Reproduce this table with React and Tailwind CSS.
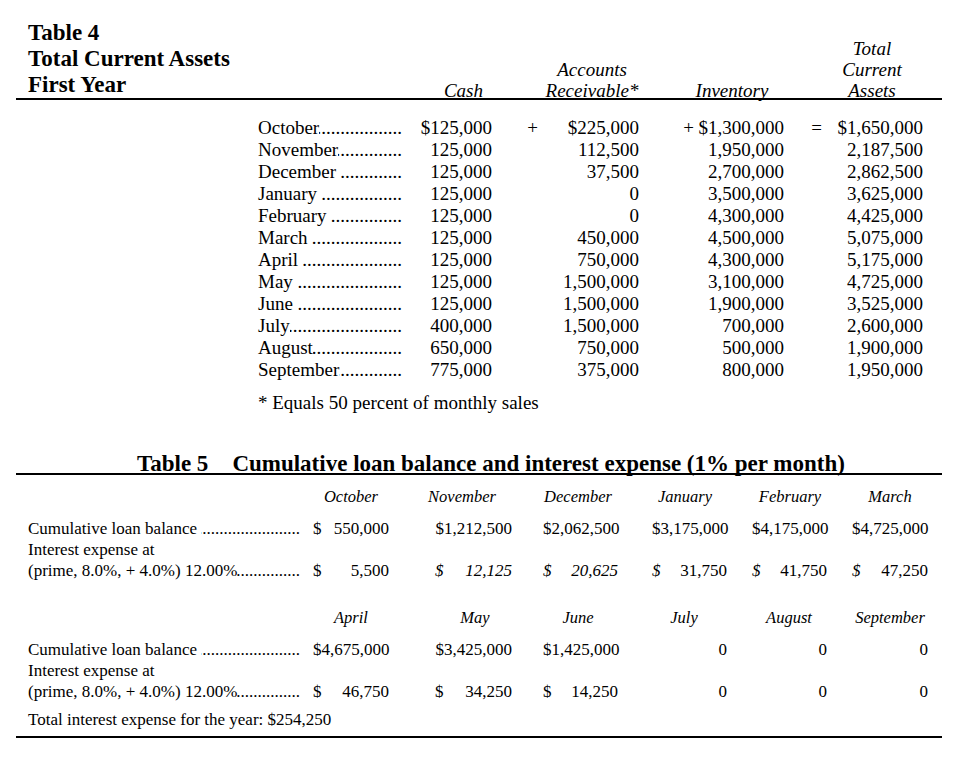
const DOTS = ".".repeat(90);

// label followed by a dot leader that always ends at the right edge of its cell
function Leader({ label, className = "" }) {
  return (
    <div className={`flex min-w-0 whitespace-nowrap ${className}`}>
      <span className="shrink-0">{label}</span>
      <span className="flex min-w-0 flex-1 justify-end overflow-hidden">
        <span className="shrink-0">{DOTS}</span>
      </span>
    </div>
  );
}

const assets = [
  ["October", "$125,000", "+", "$225,000", "+", "$1,300,000", "=", "$1,650,000"],
  ["November", "125,000", "", "112,500", "", "1,950,000", "", "2,187,500"],
  ["December\u00a0", "125,000", "", "37,500", "", "2,700,000", "", "2,862,500"],
  ["January\u00a0", "125,000", "", "0", "", "3,500,000", "", "3,625,000"],
  ["February\u00a0", "125,000", "", "0", "", "4,300,000", "", "4,425,000"],
  ["March\u00a0", "125,000", "", "450,000", "", "4,500,000", "", "5,075,000"],
  ["April\u00a0", "125,000", "", "750,000", "", "4,300,000", "", "5,175,000"],
  ["May\u00a0", "125,000", "", "1,500,000", "", "3,100,000", "", "4,725,000"],
  ["June\u00a0", "125,000", "", "1,500,000", "", "1,900,000", "", "3,525,000"],
  ["July", "400,000", "", "1,500,000", "", "700,000", "", "2,600,000"],
  ["August", "650,000", "", "750,000", "", "500,000", "", "1,900,000"],
  ["September", "775,000", "", "375,000", "", "800,000", "", "1,950,000"],
];

const t4cols = "grid grid-cols-[152px_82px_60px_87px_58px_87px_50px_89px]";

function Table4() {
  return (
    <section className="ml-[16px] w-[926px]">
      <div className="flex items-end border-b-2 border-black">
        <div className="w-[242px] shrink-0 pl-[12px] text-[23px] font-bold leading-[26px] whitespace-nowrap">
          <div>Table 4</div>
          <div>Total Current Assets</div>
          <div>First Year</div>
        </div>
        <div className={`${t4cols} -mb-[3px] items-end text-[19px] italic leading-[21px] whitespace-nowrap`}>
          <div className="col-start-2 pr-[9px] text-right">Cash</div>
          <div className="col-span-2 col-start-3 pl-[53px] text-center">
            <div>Accounts</div>
            <div>Receivable*</div>
          </div>
          <div className="col-span-2 col-start-5 pl-[41px] text-center">Inventory</div>
          <div className="col-span-2 col-start-7 pl-[37px] text-center">
            <div>Total</div>
            <div>Current</div>
            <div>Assets</div>
          </div>
        </div>
      </div>

      <div className={`${t4cols} mt-[17px] ml-[242px] text-[19px] leading-[22px] whitespace-nowrap`}>
        {assets.map(([m, cash, op1, ar, op2, inv, op3, total]) => (
          <div key={m} className="contents">
            <Leader label={m} className="pr-[8px]" />
            <div className="text-right">{cash}</div>
            <div className="pr-[14px] text-right">{op1}</div>
            <div className="text-right">{ar}</div>
            <div className="pr-[3px] text-right">{op2}</div>
            <div className="text-right">{inv}</div>
            <div className="pr-[12px] text-right">{op3}</div>
            <div className="text-right">{total}</div>
          </div>
        ))}
      </div>

      <p className="mt-[11px] ml-[242px] text-[19px] leading-[22px]">* Equals 50 percent of monthly sales</p>
    </section>
  );
}

const t5cols = "grid grid-cols-[285px_76px_123px_106px_109px_100px_101px]";
const valPads = ["pl-0", "pl-[46px]", "pl-[31px]", "pl-[34px]", "pl-[25px]", "pl-[25px]"];

const blocks = [
  {
    heads: [
      ["October", "pl-0"],
      ["November", "pl-[23px]"],
      ["December", "pl-[26px]"],
      ["January", "pl-[25px]"],
      ["February", "pl-[26px]"],
      ["March", "pl-[25px]"],
    ],
    balance: [
      { d: "$", n: "550,000" },
      "$1,212,500",
      "$2,062,500",
      "$3,175,000",
      "$4,175,000",
      "$4,725,000",
    ],
    interest: [
      { d: "$", n: "5,500" },
      { d: "$", n: "12,125", di: true, ni: true },
      { d: "$", n: "20,625", di: true, ni: true },
      { d: "$", n: "31,750", di: true },
      { d: "$", n: "41,750", di: true },
      { d: "$", n: "47,250", di: true },
    ],
  },
  {
    heads: [
      ["April", "pl-0"],
      ["May", "pl-[49px]"],
      ["June", "pl-[26px]"],
      ["July", "pl-[23px]"],
      ["August", "pl-[24px]"],
      ["September", "pl-[25px]"],
    ],
    balance: ["$4,675,000", "$3,425,000", "$1,425,000", "0", "0", "0"],
    interest: [
      { d: "$", n: "46,750" },
      { d: "$", n: "34,250" },
      { d: "$", n: "14,250" },
      "0",
      "0",
      "0",
    ],
  },
];

function Value({ v, pad }) {
  if (typeof v === "string") return <div className={`${pad} text-right`}>{v}</div>;
  return (
    <div className={pad}>
      <div className="flex justify-between">
        <span className={v.di ? "italic" : ""}>{v.d}</span>
        <span className={v.ni ? "italic" : ""}>{v.n}</span>
      </div>
    </div>
  );
}

function LoanBlock({ block, className = "" }) {
  return (
    <div className={`${t5cols} items-end whitespace-nowrap ${className}`}>
      <div />
      {block.heads.map(([h, pad]) => (
        <div key={h} className={`${pad} mb-[11px] text-center text-[16.5px] italic leading-[20px]`}>
          {h}
        </div>
      ))}

      <Leader label={"Cumulative loan balance\u00a0"} className="pr-[13px] text-[17px] leading-[21px]" />
      {block.balance.map((v, i) => (
        <div key={i} className="text-[17px] leading-[21px]">
          <Value v={v} pad={valPads[i]} />
        </div>
      ))}

      <div className="pr-[13px] text-[17px] leading-[21px]">
        <div>Interest expense at</div>
        <Leader label="(prime, 8.0%, + 4.0%) 12.00%" />
      </div>
      {block.interest.map((v, i) => (
        <div key={i} className="text-[17px] leading-[21px]">
          <Value v={v} pad={valPads[i]} />
        </div>
      ))}
    </div>
  );
}

function Table5() {
  return (
    <section className="mt-[38px] ml-[16px] w-[926px] border-b-2 border-black pb-[6px]">
      <h2 className="flex gap-[24px] border-b-2 border-black pt-[3px] pl-[121px] text-[23px] font-bold leading-[18px] whitespace-nowrap">
        <span>Table 5</span>
        <span>Cumulative loan balance and interest expense (1% per month)</span>
      </h2>
      <div className="pl-[12px]">
        <LoanBlock block={blocks[0]} className="mt-[12px]" />
        <LoanBlock block={blocks[1]} className="mt-[27px]" />
        <p className="mt-[7px] text-[17px] leading-[21px]">Total interest expense for the year: $254,250</p>
      </div>
    </section>
  );
}

export default function App() {
  return (
    <div className="h-[766px] w-[956px] bg-white pt-[20px] font-['Liberation_Serif',serif] text-black">
      <Table4 />
      <Table5 />
    </div>
  );
}
